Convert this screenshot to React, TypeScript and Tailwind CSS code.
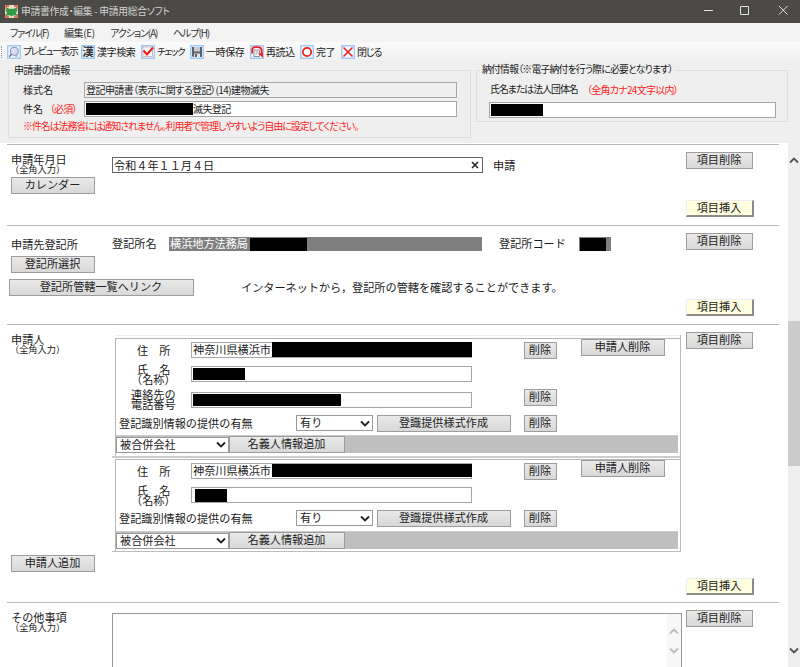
import type { ReactNode } from "react";
import clsx from "clsx";

const TOOLS = [
  { id: "preview", label: "プレビュー表示", width: "w-[60px]", text: "text-[9.8px] tracking-[-1.4px]" },
  { id: "kanji", label: "漢字検索", width: "w-[46px]", text: "tracking-[-0.4px]" },
  { id: "check", label: "チェック", width: "w-[35px]", text: "text-[9.6px] tracking-[-1.4px]" },
  { id: "save", label: "一時保存", width: "w-[46px]", text: "tracking-[-0.4px]" },
  { id: "reload", label: "再読込", width: "w-[36px]", text: "tracking-[-0.4px]" },
  { id: "done", label: "完了", width: "w-[27px]", text: "tracking-[-0.4px]" },
  { id: "close", label: "閉じる", width: "w-[30px]", text: "tracking-[-1.1px]" },
];

/* ---------- icons ---------- */

function AppIcon() {
  return (
    <svg width="13" height="13" viewBox="0 0 13 13">
      <rect width="13" height="13" fill="#e9dccb" />
      <path d="M1 4V1h3M9 1h3v3M12 9v3H9M4 12H1V9" fill="none" stroke="#d2552f" strokeWidth="1.4" />
      <path d="M0.5 5L2.5 2.8L5 4.2L6.5 3.4L8 4.2L10.5 2.8L12.5 5L11 8L11.8 10.8L8.5 10.2L6.5 11.2L4.5 10.2L1.2 10.8L2 8Z" fill="#2f9c45" />
    </svg>
  );
}

function ToolIcon({ id }: { id: string }) {
  return (
    <svg width="14" height="14" viewBox="0 0 14 14" className="shrink-0">
      <rect x="0.75" y="0.75" width="12.5" height="12.5" fill="#f2f7fd" stroke="#8fc3f5" strokeWidth="1.2" />
      {id === "preview" && (
        <g>
          <circle cx="7.3" cy="6.2" r="4" fill="#d9dcf6" stroke="#8d90ac" strokeWidth="1.1" />
          <path d="M4.5 9.3L2.3 11.8" stroke="#6a6d86" strokeWidth="1.5" />
          <path d="M8 11h3" stroke="#8d90ac" strokeWidth="1" />
        </g>
      )}
      {id === "kanji" && (
        <text x="7" y="11.2" fontSize="11.5" fontWeight="700" textAnchor="middle" fill="#333" className="font-['Noto_Sans_CJK_JP',sans-serif]">
          漢
        </text>
      )}
      {id === "check" && (
        <g>
          <rect x="2" y="2" width="9.5" height="9.5" fill="#fff" stroke="#c9a9a9" strokeWidth="0.8" />
          <path d="M2.5 5.5L6 9.5L12 2.5" fill="none" stroke="#f01818" strokeWidth="2" />
        </g>
      )}
      {id === "save" && (
        <g>
          <path d="M2 2h10v10H3l-1-1z" fill="#5c6066" />
          <rect x="4" y="2" width="6" height="4.5" fill="#c4ccd6" />
          <rect x="4" y="8.5" width="6" height="3.5" fill="#dfe5ec" />
          <rect x="5" y="9" width="2" height="3" fill="#5c6066" />
        </g>
      )}
      {id === "reload" && (
        <g fill="none">
          <rect x="4" y="5" width="5.5" height="6.5" fill="#fff" stroke="#777" strokeWidth="0.8" />
          <path d="M5.5 7h3M5.5 9h2" stroke="#777" strokeWidth="0.8" />
          <path d="M2.2 8.5V5.5Q2.2 2.2 5 2.2H8.5Q11.7 2.5 11.7 6V9" stroke="#ee1c24" strokeWidth="1.8" />
          <path d="M8 8.3h5v4.5z" fill="#ee1c24" />
        </g>
      )}
      {id === "done" && <circle cx="7" cy="7" r="4.2" fill="#fff" stroke="#f01818" strokeWidth="1.7" />}
      {id === "close" && <path d="M2.5 2.5l9 9M11.5 2.5l-9 9" stroke="#f01818" strokeWidth="1.5" />}
    </svg>
  );
}

function Chevron({ up, className }: { up?: boolean; className?: string }) {
  return (
    <svg width="10" height="7" viewBox="0 0 10 7" className={clsx("shrink-0", className)}>
      <path d={up ? "M1 5.5L5 1.5L9 5.5" : "M1 1.5L5 5.5L9 1.5"} fill="none" stroke="currentColor" strokeWidth="1.8" />
    </svg>
  );
}

/* ---------- form parts ---------- */

function Btn({ children, className }: { children: ReactNode; className?: string }) {
  return (
    <button
      className={clsx(
        "flex h-[17px] shrink-0 items-center justify-center whitespace-nowrap border border-[#9c9c9c] bg-linear-to-b from-[#e9e9e9] to-[#d8d8d8] pr-px pb-px leading-none text-[#222]",
        className,
      )}
    >
      {children}
    </button>
  );
}

function InsertBtn() {
  return (
    <button className="flex h-[17px] w-[68px] items-center justify-center whitespace-nowrap border-t border-r-2 border-b-2 border-l border-t-[#eee] border-r-[#8d8d85] border-b-[#8d8d85] border-l-[#eee] bg-[#ffffdf] pr-px leading-none text-[#222]">
      項目挿入
    </button>
  );
}

function Field({ children, className, disabled }: { children?: ReactNode; className?: string; disabled?: boolean }) {
  return (
    <div
      className={clsx(
        "relative flex h-4 shrink-0 items-center whitespace-nowrap border px-px leading-none",
        disabled ? "bg-[#efefef]" : "bg-white",
        className,
      )}
    >
      {children}
    </div>
  );
}

function Select({ value, className }: { value: string; className?: string }) {
  return (
    <div className={clsx("flex h-4 shrink-0 items-center justify-between whitespace-nowrap border border-[#999] bg-white pr-0.5 pl-[3px] leading-none text-[#222]", className)}>
      {value}
      <Chevron className="text-[#222]" />
    </div>
  );
}

function Section({ title, note, left, gap, height, children }: {
  title: string;
  note?: boolean;
  left?: ReactNode;
  gap?: string;
  height: string;
  children: ReactNode;
}) {
  return (
    <section className={clsx("ml-[7px] flex w-[772px] shrink-0 border-t border-[#b9b9b9]", height)}>
      <div className="w-[105px] shrink-0 pl-1">
        <div className={clsx("whitespace-nowrap leading-[11px]", note ? "mt-[9px]" : "mt-[13px]")}>{title}</div>
        {note && <div className="-ml-px text-[9.2px] leading-[9px] whitespace-nowrap">（全角入力）</div>}
        {left}
      </div>
      <div className="w-[574px] shrink-0">{children}</div>
      <div>
        <Btn className="mt-[7px] w-[67px]">項目削除</Btn>
        {gap && (
          <div className={gap}>
            <InsertBtn />
          </div>
        )}
      </div>
    </section>
  );
}

function Applicant({ phone }: { phone?: boolean }) {
  return (
    <div className={clsx("border-t border-l border-[#b5b5b5]", phone ? "pb-[3px]" : "pb-0.5")}>
      <div className="flex h-[27px] pt-[3px]">
        <div className="w-[75px] pt-[3px] pl-[21px] leading-none">住　所</div>
        <Field className="w-[281px] border-[#a6a6a6]">
          神奈川県横浜市
          <span className={clsx("absolute right-[-1px] left-[80px] bg-black", phone ? "-top-px h-[15px]" : "top-0 h-[13px]")} />
        </Field>
        <Btn className="ml-[52px] w-[33px]">削除</Btn>
        <Btn className="-mt-[3px] ml-6 w-[84px]">申請人削除</Btn>
      </div>
      <div className="flex h-[25px]">
        <div className="-mt-0.5 w-[75px] pl-[21px] leading-[10px] whitespace-nowrap">
          <div>氏　名</div>
          <div className="-ml-[6px]">（名称）</div>
        </div>
        <Field className="w-[281px] border-[#a6a6a6]">
          <span className={clsx("bg-black", phone ? "h-3 w-[52px]" : "ml-0.5 h-[13px] w-8")} />
        </Field>
      </div>
      {phone && (
        <div className="flex h-[24px] pt-px">
          <div className="w-[75px] pl-[15px] leading-[10px] whitespace-nowrap">
            <div className="-mt-[3px]">連絡先の</div>
            <div>電話番号</div>
          </div>
          <Field className="w-[281px] border-[#a6a6a6]">
            <span className="h-3 w-[148px] bg-black" />
          </Field>
          <Btn className="-mt-[3px] ml-[52px] w-[33px]">削除</Btn>
        </div>
      )}
      <div className={clsx("flex", phone ? "h-[20px]" : "mt-[-2px] h-[21px]")}>
        <div className="w-[180px] pt-[2px] pl-[3px] leading-[12px] whitespace-nowrap">登記識別情報の提供の有無</div>
        <Select value="有り" className="w-[77px]" />
        <Btn className="ml-1 w-[134px]">登識提供様式作成</Btn>
        <Btn className="ml-[13px] w-[33px]">削除</Btn>
      </div>
      <div className="flex h-[18px] w-[562px] items-center border-t border-[#ccc] bg-[#bfbfbf]">
        <Select value="被合併会社" className="w-[113px]" />
        <Btn className="w-[116px]">名義人情報追加</Btn>
      </div>
    </div>
  );
}

/* ---------- window ---------- */

function TitleBar() {
  return (
    <header className="flex h-[23px] shrink-0 items-center bg-[#4b4a47] pl-[5px] text-[9.8px] leading-none text-[#d2d2d0]">
      <AppIcon />
      <span className="ml-[3px] tracking-[-0.28px] whitespace-nowrap">申請書作成・編集 - 申請用総合ソフト</span>
      <svg width="100" height="23" viewBox="0 0 100 23" className="ml-auto" fill="none" stroke="#e2e2e2">
        <path d="M4 10.5h9M40.5 6.5h8v8h-8zM79 6l8.5 8.5M87.5 6L79 14.5" />
      </svg>
    </header>
  );
}

function MenuBar() {
  return (
    <nav className="flex h-[19px] shrink-0 items-center bg-[#f3f3f3] pl-[10px] text-[10px] leading-none whitespace-nowrap text-[#333]">
      <span className="w-[54px] tracking-[-1.2px]">ファイル(F)</span>
      <span className="w-[46px] tracking-[-0.4px]">編集(E)</span>
      <span className="w-[63px] tracking-[-1.1px]">アクション(A)</span>
      <span className="tracking-[-1.1px]">ヘルプ(H)</span>
    </nav>
  );
}

function Toolbar() {
  return (
    <div className="flex h-[20px] shrink-0 items-center bg-linear-to-b from-[#fbfbfb] to-[#efefef] text-[10px] leading-none whitespace-nowrap text-[#222]">
      <span className="mr-[5px] ml-px h-3 border-l border-dotted border-[#999]" />
      {TOOLS.map((tool) => (
        <div key={tool.id} className="flex items-center">
          <ToolIcon id={tool.id} />
          <span className={clsx("pl-0.5", tool.width, tool.text)}>{tool.label}</span>
        </div>
      ))}
    </div>
  );
}

function InfoPanel() {
  return (
    <div className="flex h-[81px] shrink-0 items-start gap-[5px] bg-[#efefef] pt-[8px] pl-2 text-[10px] leading-none whitespace-nowrap">
      <div className="h-[68px] w-[463px] border border-[#dedede]">
        <div className="-mt-1.5 ml-[3px] w-fit bg-[#efefef] px-0.5 tracking-[-0.7px]">申請書の情報</div>
        <div className="mt-[7px] flex items-center pl-[14px]">
          <span className="w-[61px]">様式名</span>
          <Field disabled className="w-[373px] border-[#a6a6a6] tracking-[-0.55px]">
            登記申請書（表示に関する登記）(14)建物滅失
          </Field>
        </div>
        <div className="mt-[3px] flex items-center pl-[14px]">
          <span className="flex w-[61px]">
            件名<span className="ml-[7px] tracking-[-0.9px] text-[#ff1a1a]">（必須）</span>
          </span>
          <Field className="w-[373px] border-[#a6a6a6]">
            <span className="h-3 w-[107px] bg-black" />
            <span className="tracking-[-0.6px]">滅失登記</span>
          </Field>
        </div>
        <div className="mt-[5px] pl-[14px] text-[9.8px] tracking-[-0.92px] text-[#ff1a1a]">
          ※件名は法務省には通知されません。利用者で管理しやすいよう自由に設定してください。
        </div>
      </div>
      <div className="h-[52px] w-[312px] border border-[#dedede]">
        <div className="-mt-1.5 ml-[3px] w-fit bg-[#efefef] px-0.5 text-[9.8px] tracking-[-0.75px]">納付情報（※電子納付を行う際に必要となります）</div>
        <div className="mt-2.5 flex pl-[13px]">
          <span className="w-[97px] text-[9.8px] tracking-[-0.9px]">氏名または法人団体名</span>
          <span className="tracking-[-0.75px] text-[#ff1a1a]">（全角カナ24文字以内）</span>
        </div>
        <Field className="mt-[7px] ml-3 w-[287px] border-[#a6a6a6]">
          <span className="h-3 w-[52px] bg-black" />
        </Field>
      </div>
    </div>
  );
}

export default function App() {
  return (
    <div className="flex h-[667px] w-[800px] flex-col overflow-hidden bg-white font-['Noto_Sans_CJK_JP',sans-serif] text-[11.15px] text-[#1a1a1a]">
      <div className="flex shrink-0 flex-col [font-feature-settings:'palt']">
        <TitleBar />
        <MenuBar />
        <Toolbar />
        <InfoPanel />
      </div>

      <div className="flex min-h-0 flex-1">
        <main className="flex w-[788px] shrink-0 flex-col overflow-hidden pt-px">
          <Section title="申請年月日" note height="h-[81px]" gap="mt-[31px]" left={<Btn className="mt-[3px] w-[84px]">カレンダー</Btn>}>
            <div className="mt-3 flex items-center">
              <Field className="w-[371px] justify-between border-[#666] pr-[3px]">
                令和４年１１月４日
                <svg width="8" height="8" viewBox="0 0 8 8">
                  <path d="M1 1l6 6M7 1L1 7" stroke="#222" strokeWidth="1.5" />
                </svg>
              </Field>
              <span className="ml-2.5">申請</span>
            </div>
          </Section>

          <Section
            title="申請先登記所"
            height="h-[99px]"
            gap="mt-[49px]"
            left={
              <>
                <Btn className="mt-[6px] w-[84px]">登記所選択</Btn>
                <Btn className="mt-[6px] -ml-0.5 w-[185px]">登記所管轄一覧へリンク</Btn>
              </>
            }
          >
            <div className="mt-[11px] flex items-center leading-none">
              <span className="w-[57px]">登記所名</span>
              <div className="flex h-[14px] w-[313px] items-center bg-[#7f7f7f] pl-px text-white">
                <span className="w-20">横浜地方法務局</span>
                <span className="h-[13px] w-[57px] bg-black" />
              </div>
              <span className="ml-[17px] w-20">登記所コード</span>
              <div className="flex h-[14px] w-8 items-center bg-[#7f7f7f] pl-px">
                <span className="h-[13px] w-[26px] bg-black" />
              </div>
            </div>
            <div className="mt-[31px] ml-[129px] leading-none">インターネットから，登記所の管轄を確認することができます。</div>
          </Section>

          <Section
            title="申請人"
            note
            height="h-[278px]"
            gap="mt-[229px]"
            left={<Btn className="mt-[201px] w-[84px]">申請人追加</Btn>}
          >
            <div className="mt-[10px] w-[569px] border-r border-b border-[#bcbcbc] pl-[3px]">
              <div className="border-t border-[#eee] pt-0.5">
                <Applicant phone />
              </div>
              <div className="-ml-[3px] border-t-2 border-[#ccc] pt-px pl-[3px]">
                <Applicant />
              </div>
            </div>
          </Section>

          <Section title="その他事項" note height="h-[80px]">
            <div className="mt-[10px] flex h-[80px] w-[570px] justify-end border border-[#999]">
              <div className="flex w-[14px] flex-col items-center gap-3 bg-[#f7f7f7] pt-[14px] text-[#bbb]">
                <Chevron up />
                <Chevron />
              </div>
            </div>
          </Section>
        </main>

        <div className="flex w-3 flex-col items-center bg-[#efefef] text-[#555]">
          <Chevron up className="mt-[14px]" />
          <div className="mt-[157px] h-[145px] w-3 bg-[#cbcbcb]" />
          <Chevron className="mt-auto mb-[13px]" />
        </div>
      </div>
    </div>
  );
}
